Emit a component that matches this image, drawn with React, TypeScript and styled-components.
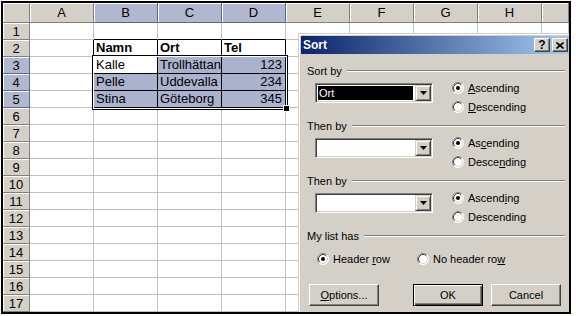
import React from "react";
import styled, { createGlobalStyle } from "styled-components";

const GlobalStyle = createGlobalStyle`
  body {
    margin: 0;
    background: #fff;
  }
`;

const FACE = "#d4d0c8";
const SHADOW = "#808080";
const DARK = "#404040";
const GRID = "#c0c0c0";
const PICK = "#aab2cd";

const Screen = styled.div`
  position: relative;
  box-sizing: border-box;
  margin: 1px 0 0 1px;
  width: 570px;
  height: 313px;
  border: 2px solid #000;
  overflow: hidden;
  font-family: "Liberation Sans", Arial, sans-serif;
`;

const Sheet = styled.div`
  position: relative;
  display: grid;
  grid-template-columns: 27px repeat(8, 64px) 1fr;
  grid-template-rows: 20px repeat(17, 17px);
  font-size: 13px;
  color: #000;
`;

const Head = styled.div<{ $on?: boolean }>`
  box-sizing: border-box;
  display: flex;
  align-items: center;
  justify-content: center;
  background: ${(p) => (p.$on ? "#b1b7cf" : FACE)};
  border-right: 1px solid ${(p) => (p.$on ? "#5a6796" : SHADOW)};
  border-bottom: 1px solid ${(p) => (p.$on ? "#5a6796" : SHADOW)};
  box-shadow: inset 1px 1px 0 #fff;
  font-size: 13px;
`;

const Cell = styled.div<{
  $right?: boolean;
  $bottom?: boolean;
  $fill?: boolean;
  $bold?: boolean;
  $num?: boolean;
}>`
  box-sizing: border-box;
  display: flex;
  align-items: flex-end;
  justify-content: ${(p) => (p.$num ? "flex-end" : "flex-start")};
  padding: 0 3px 1px 2px;
  line-height: 15px;
  white-space: nowrap;
  overflow: hidden;
  background: ${(p) => (p.$fill ? PICK : "#fff")};
  border-right: 1px solid ${(p) => (p.$right ? "#000" : GRID)};
  border-bottom: 1px solid ${(p) => (p.$bottom ? "#000" : GRID)};
  font-weight: ${(p) => (p.$bold ? "bold" : "normal")};
`;

const Selection = styled.div`
  position: absolute;
  left: 89px;
  top: 52px;
  width: 196px;
  height: 55px;
  box-sizing: border-box;
  border: 1px solid #000;
  box-shadow: inset 0 0 0 1px #fff;
  pointer-events: none;
`;

const FillHandle = styled.div`
  position: absolute;
  left: 280px;
  top: 102px;
  width: 5px;
  height: 5px;
  background: #000;
  border: 1px solid #fff;
`;

const Dialog = styled.div`
  position: absolute;
  left: 295px;
  top: 30px;
  width: 275px;
  height: 290px;
  box-sizing: border-box;
  padding: 1px;
  background: ${FACE};
  border: 1px solid;
  border-color: ${FACE} ${DARK} ${DARK} ${FACE};
  box-shadow: inset 1px 1px 0 #fff, inset -1px -1px 0 ${SHADOW};
  display: flex;
  flex-direction: column;
  font-family: "Liberation Sans", Tahoma, sans-serif;
  font-size: 11px;
  color: #000;
`;

const TitleBar = styled.div`
  height: 18px;
  margin: 1px;
  display: flex;
  align-items: center;
  padding: 0 2px;
  background: linear-gradient(to right, #0a246a, #a6caf0);
  color: #fff;
  font-weight: bold;
  font-size: 12px;
`;

const Title = styled.span`
  flex: 1;
`;

const CaptionButton = styled.div`
  box-sizing: border-box;
  width: 16px;
  height: 14px;
  margin-left: 2px;
  display: flex;
  align-items: center;
  justify-content: center;
  background: ${FACE};
  color: #000;
  border: 1px solid;
  border-color: #fff ${DARK} ${DARK} #fff;
  box-shadow: inset -1px -1px 0 ${SHADOW};
  font-size: 12px;
  font-family: "Liberation Sans", sans-serif;
`;

const Body = styled.div`
  display: flex;
  flex-direction: column;
  padding: 9px 6px 0 7px;
`;

const GroupHead = styled.div`
  height: 14px;
  display: flex;
  align-items: center;
  gap: 5px;
`;

const Rule = styled.div`
  flex: 1;
  height: 0;
  border-top: 1px solid ${SHADOW};
  border-bottom: 1px solid #fff;
`;

const Group = styled.div`
  display: flex;
  flex-direction: column;
  margin-bottom: 3px;
`;

const KeyRow = styled.div`
  display: flex;
  padding-left: 8px;
`;

const Combo = styled.div`
  box-sizing: border-box;
  width: 118px;
  height: 20px;
  margin-top: 5px;
  display: flex;
  align-items: center;
  padding: 1px;
  background: #fff;
  border: 1px solid;
  border-color: ${SHADOW} #fff #fff ${SHADOW};
  box-shadow: inset 1px 1px 0 ${DARK}, inset -1px -1px 0 ${FACE};
`;

const ComboText = styled.div<{ $picked?: boolean }>`
  flex: 1;
  height: 14px;
  margin: 0 2px 0 1px;
  padding-left: 1px;
  line-height: 14px;
  background: ${(p) => (p.$picked ? "#000" : "transparent")};
  color: ${(p) => (p.$picked ? "#fff" : "#000")};
`;

const DropButton = styled.div`
  box-sizing: border-box;
  width: 16px;
  height: 16px;
  display: flex;
  align-items: center;
  justify-content: center;
  background: ${FACE};
  border: 1px solid;
  border-color: ${FACE} ${DARK} ${DARK} ${FACE};
  box-shadow: inset 1px 1px 0 #fff, inset -1px -1px 0 ${SHADOW};
`;

const Options = styled.div`
  display: flex;
  flex-direction: column;
  margin-left: 19px;
`;

const Option = styled.label<{ $width?: number }>`
  height: 19px;
  display: flex;
  align-items: center;
  gap: 4px;
  width: ${(p) => (p.$width ? `${p.$width}px` : "auto")};
`;

const HeaderRow = styled.div`
  display: flex;
  padding-left: 10px;
  margin-top: 6px;
`;

const Buttons = styled.div`
  display: flex;
  padding-left: 2px;
  margin-top: 16px;
`;

const PushButton = styled.div<{ $default?: boolean; $gap?: number }>`
  box-sizing: border-box;
  width: 70px;
  height: 22px;
  margin-left: ${(p) => p.$gap ?? 0}px;
  display: flex;
  align-items: center;
  justify-content: center;
  background: ${FACE};
  border: 1px solid;
  border-color: ${(p) =>
    p.$default ? "#000" : `#fff ${DARK} ${DARK} #fff`};
  box-shadow: ${(p) =>
    p.$default
      ? `inset 1px 1px 0 #fff, inset -1px -1px 0 ${DARK}, inset -2px -2px 0 ${SHADOW}`
      : `inset -1px -1px 0 ${SHADOW}`};
`;

const Radio = ({ on }: { on?: boolean }) => (
  <svg width="12" height="12" viewBox="0 0 12 12">
    <circle cx="6" cy="6" r="5.5" fill="#fff" />
    <path d="M2.11 9.89 A5.5 5.5 0 0 1 9.89 2.11" fill="none" stroke={SHADOW} />
    <path d="M9.89 2.11 A5.5 5.5 0 0 1 2.11 9.89" fill="none" stroke="#fff" />
    <path d="M2.82 9.18 A4.5 4.5 0 0 1 9.18 2.82" fill="none" stroke={DARK} />
    <path d="M9.18 2.82 A4.5 4.5 0 0 1 2.82 9.18" fill="none" stroke={FACE} />
    {on && <circle cx="6" cy="6" r="2" fill="#000" />}
  </svg>
);

const Arrow = () => (
  <svg width="7" height="4" viewBox="0 0 7 4">
    <path d="M0 0h7L3.5 4z" fill="#000" />
  </svg>
);

const CloseGlyph = () => (
  <svg width="8" height="7" viewBox="0 0 8 7">
    <path d="M0.5 0.5L7.5 6.5M7.5 0.5L0.5 6.5" stroke="#000" strokeWidth="1.6" />
  </svg>
);

// label text with one underlined access key
const Key = ({ text, at }: { text: string; at: number }) => (
  <span>
    {text.slice(0, at)}
    <u>{text[at]}</u>
    {text.slice(at + 1)}
  </span>
);

const columns = ["A", "B", "C", "D", "E", "F", "G", "H", ""];

const data: Record<number, string[]> = {
  2: ["", "Namn", "Ort", "Tel"],
  3: ["", "Kalle", "Trollhättan", "123"],
  4: ["", "Pelle", "Uddevalla", "234"],
  5: ["", "Stina", "Göteborg", "345"],
};

const inBox = (r: number, c: number) => r >= 2 && r <= 5 && c >= 1 && c <= 3;

const sections = [
  { label: "Sort by", value: "Ort", asc: 0, desc: 0 },
  { label: "Then by", value: "", asc: 2, desc: 5 },
  { label: "Then by", value: "", asc: 6, desc: 9 },
];

const App = () => {
  const rows = Array.from({ length: 17 }, (_, i) => i + 1);
  return (
    <>
      <GlobalStyle />
      <Screen>
        <Sheet>
          <Head />
          {columns.map((c, i) => (
            <Head key={c + i} $on={i >= 1 && i <= 3}>
              {c}
            </Head>
          ))}
          {rows.map((r) => (
            <React.Fragment key={r}>
              <Head $on={r >= 3 && r <= 5}>{r}</Head>
              {columns.map((_, c) => {
                const text = data[r]?.[c] ?? "";
                return (
                  <Cell
                    key={c}
                    $right={inBox(r, c) || inBox(r, c + 1)}
                    $bottom={inBox(r, c) || inBox(r + 1, c)}
                    $fill={r >= 3 && r <= 5 && c >= 1 && c <= 3 && !(r === 3 && c === 1)}
                    $bold={r === 2}
                    $num={c === 3 && r > 2}
                  >
                    {text}
                  </Cell>
                );
              })}
            </React.Fragment>
          ))}
          <Selection />
          <FillHandle />
        </Sheet>

        <Dialog>
          <TitleBar>
            <Title>Sort</Title>
            <CaptionButton>
              <b>?</b>
            </CaptionButton>
            <CaptionButton>
              <CloseGlyph />
            </CaptionButton>
          </TitleBar>
          <Body>
            {sections.map((s, i) => (
              <Group key={i}>
                <GroupHead>
                  {s.label}
                  <Rule />
                </GroupHead>
                <KeyRow>
                  <Combo>
                    <ComboText $picked={!!s.value}>{s.value}</ComboText>
                    <DropButton>
                      <Arrow />
                    </DropButton>
                  </Combo>
                  <Options>
                    <Option>
                      <Radio on />
                      <Key text="Ascending" at={s.asc} />
                    </Option>
                    <Option>
                      <Radio />
                      <Key text="Descending" at={s.desc} />
                    </Option>
                  </Options>
                </KeyRow>
              </Group>
            ))}
            <GroupHead>
              My list has
              <Rule />
            </GroupHead>
            <HeaderRow>
              <Option $width={100}>
                <Radio on />
                <Key text="Header row" at={7} />
              </Option>
              <Option>
                <Radio />
                <Key text="No header row" at={12} />
              </Option>
            </HeaderRow>
            <Buttons>
              <PushButton>
                <Key text="Options..." at={0} />
              </PushButton>
              <PushButton $default $gap={34}>
                OK
              </PushButton>
              <PushButton $gap={8}>Cancel</PushButton>
            </Buttons>
          </Body>
        </Dialog>
      </Screen>
    </>
  );
};

export default App;
